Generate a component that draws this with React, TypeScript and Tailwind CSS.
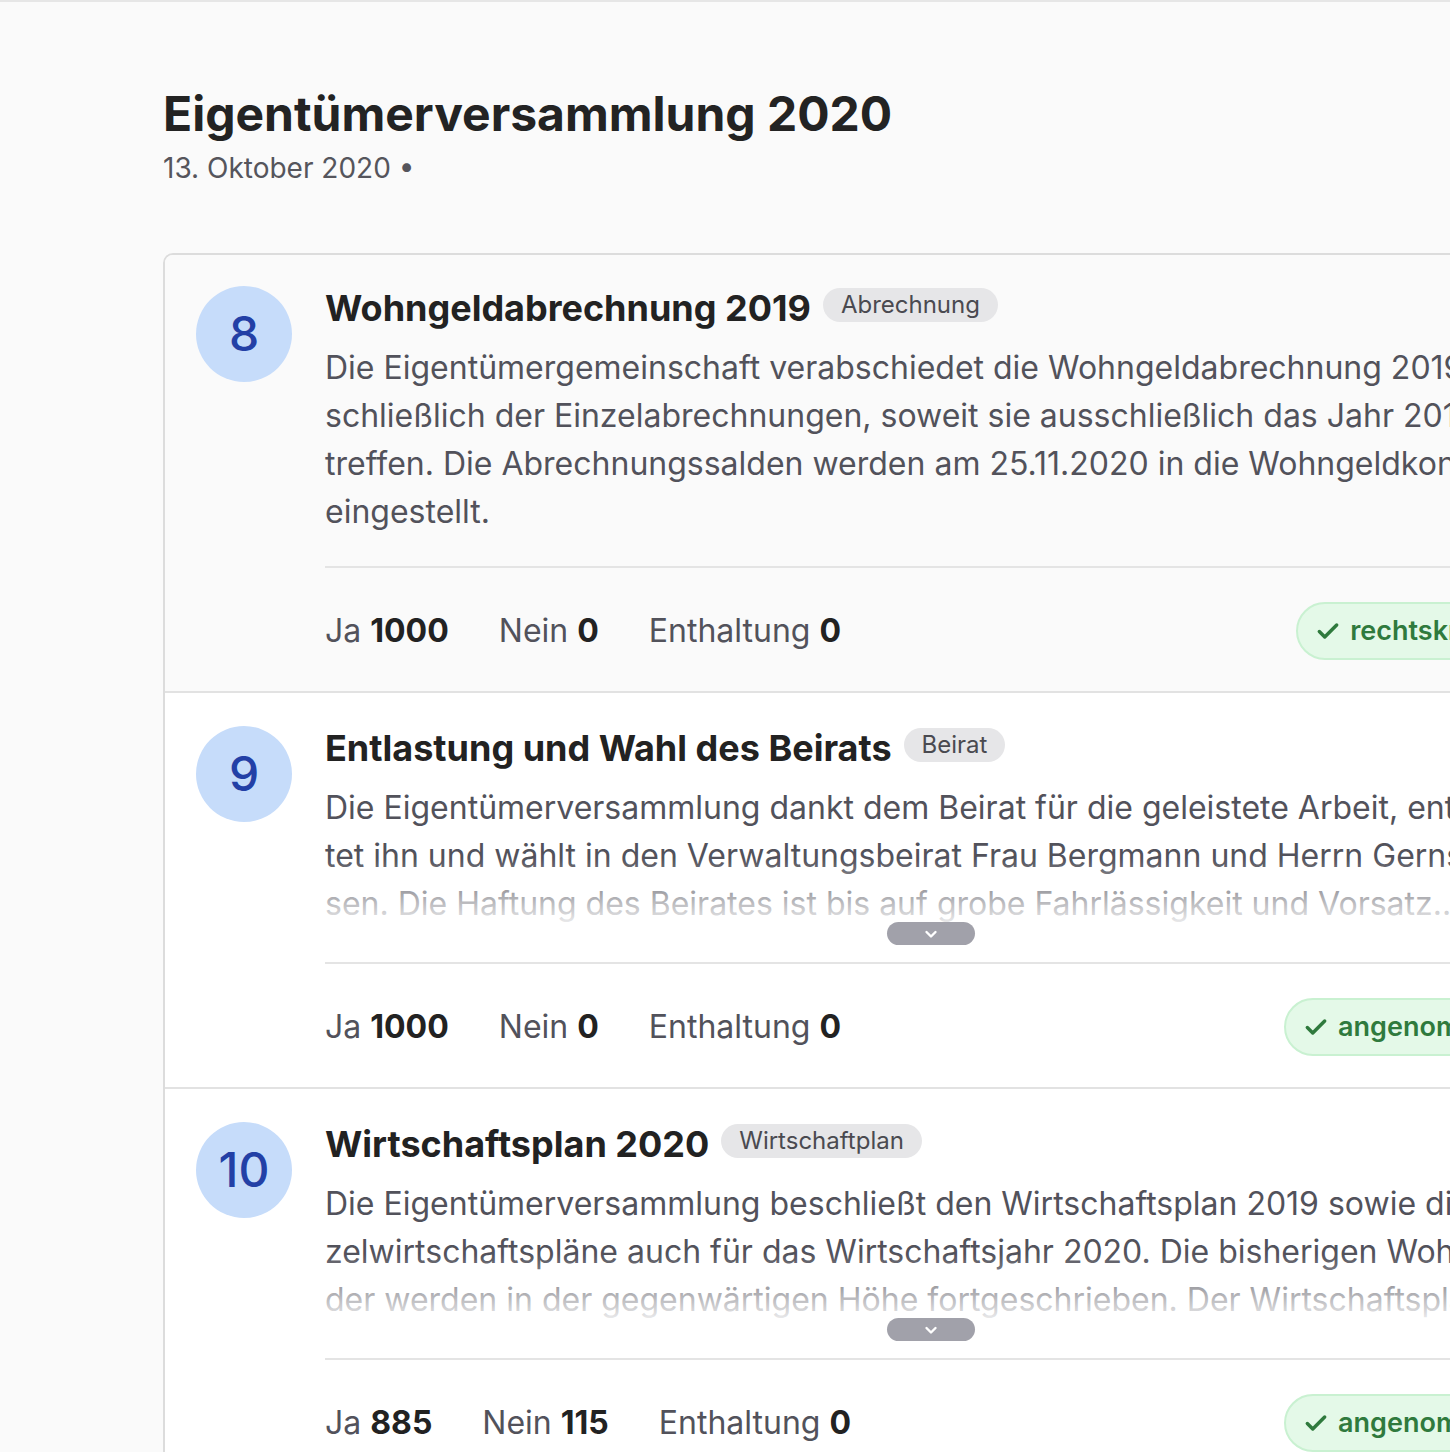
import React from "react";

type Item = {
  n: string;
  title: string;
  tag: string;
  lines: string[];
  collapsed: boolean;
  ja: string;
  nein: string;
  enth: string;
  status: string;
  bg: string;
};

const items: Item[] = [
  {
    n: "8",
    title: "Wohngeldabrechnung 2019",
    tag: "Abrechnung",
    lines: [
      "Die Eigentümergemeinschaft verabschiedet die Wohngeldabrechnung 2019 ein-",
      "schließlich der Einzelabrechnungen, soweit sie ausschließlich das Jahr 2019 be-",
      "treffen. Die Abrechnungssalden werden am 25.11.2020 in die Wohngeldkonten",
      "eingestellt.",
    ],
    collapsed: false,
    ja: "1000",
    nein: "0",
    enth: "0",
    status: "rechtskräftig",
    bg: "bg-[#fafafa]",
  },
  {
    n: "9",
    title: "Entlastung und Wahl des Beirats",
    tag: "Beirat",
    lines: [
      "Die Eigentümerversammlung dankt dem Beirat für die geleistete Arbeit, entlas-",
      "tet ihn und wählt in den Verwaltungsbeirat Frau Bergmann und Herrn Gerns-",
      "sen. Die Haftung des Beirates ist bis auf grobe Fahrlässigkeit und Vorsatz...",
    ],
    collapsed: true,
    ja: "1000",
    nein: "0",
    enth: "0",
    status: "angenommen",
    bg: "bg-white",
  },
  {
    n: "10",
    title: "Wirtschaftsplan 2020",
    tag: "Wirtschaftplan",
    lines: [
      "Die Eigentümerversammlung beschließt den Wirtschaftsplan 2019 sowie die Ein-",
      "zelwirtschaftspläne auch für das Wirtschaftsjahr 2020. Die bisherigen Wohngel-",
      "der werden in der gegenwärtigen Höhe fortgeschrieben. Der Wirtschaftsplan",
    ],
    collapsed: true,
    ja: "885",
    nein: "115",
    enth: "0",
    status: "angenommen",
    bg: "bg-white",
  },
];

function Check() {
  return (
    <svg width="26" height="26" viewBox="0 0 24 24" fill="none" stroke="currentColor" strokeWidth="3.2" strokeLinecap="round" strokeLinejoin="round">
      <path d="M4 12.5l5 5L20 6.5" />
    </svg>
  );
}

function Chevron() {
  return (
    <svg width="14" height="10" viewBox="0 0 14 10" fill="none" stroke="white" strokeWidth="2.4" strokeLinecap="round" strokeLinejoin="round">
      <path d="M2.5 3l4.5 4.5L11.5 3" />
    </svg>
  );
}

function AgendaItem({ item, first }: { item: Item; first: boolean }) {
  return (
    <div className={`flex gap-[33px] px-[31px] border-b-2 border-[#e2e2e2] ${item.bg} ${first ? "pt-[31px]" : "pt-[33px]"}`}>
      <div className="w-[96px] h-[96px] shrink-0 rounded-full bg-[#c6dcfa] flex items-center justify-center text-[48px] font-medium text-[#2340a6] leading-none">
        {item.n}
      </div>
      <div className="w-[1212px] shrink-0">
        <div className="flex items-center gap-[12px]">
          <div className="text-[36px] leading-[44px] font-bold text-[#222222] whitespace-nowrap">{item.title}</div>
          <div className="h-[34px] px-[18px] rounded-full bg-[#e6e6e8] text-[#4a4a50] text-[24px] leading-[34px] whitespace-nowrap -mt-[6px]">
            {item.tag}
          </div>
        </div>
        <div className="relative mt-[14px]">
          {item.lines.map((l, i) => (
            <div key={i} className="text-[32px] leading-[48px] text-[#52525b] whitespace-nowrap">
              {l}
            </div>
          ))}
          {item.collapsed && (
            <div className="absolute left-0 right-0 bottom-0 h-[70px] bg-linear-to-b from-white/0 to-white/95" />
          )}
        </div>
        {item.collapsed ? (
          <div className="flex justify-center -mt-[6px] mb-[17px] relative">
            <div className="w-[88px] h-[23px] rounded-full bg-[#a1a1aa] flex items-center justify-center">
              <Chevron />
            </div>
          </div>
        ) : (
          <div className="h-[30px]" />
        )}
        <div className="border-t-2 border-[#e4e4e4] flex items-center justify-between pt-[34px] pb-[31px]">
          <div className="flex items-center gap-[50px] text-[32px] leading-[40px] text-[#52525b] whitespace-nowrap">
            <div>
              Ja <span className="font-bold text-[#222222]">{item.ja}</span>
            </div>
            <div>
              Nein <span className="font-bold text-[#222222]">{item.nein}</span>
            </div>
            <div>
              Enthaltung <span className="font-bold text-[#222222]">{item.enth}</span>
            </div>
          </div>
          <div className="h-[58px] pl-[17px] pr-[18px] rounded-full border-2 border-[#c9f1d1] bg-[#e4f9e8] text-[#2f7a3d] flex items-center gap-[9px] text-[27px] font-semibold whitespace-nowrap">
            <Check />
            <span>{item.status}</span>
          </div>
        </div>
      </div>
    </div>
  );
}

export default function App() {
  return (
    <div className="w-[1450px] h-[1452px] overflow-hidden bg-[#fafafa] border-t-2 border-[#e6e6e6] font-['Inter',sans-serif]">
      <div className="pl-[163px] pt-[83px]">
        <h1 className="text-[48px] leading-[58px] font-bold text-[#232323] whitespace-nowrap">Eigentümerversammlung 2020</h1>
        <div className="text-[28px] leading-[34px] text-[#55555c] mt-[8px] whitespace-nowrap">13. Oktober 2020 •</div>
        <div className="mt-[68px] w-[1407px] border-2 border-[#dcdcdc] rounded-tl-[10px] overflow-hidden">
          {items.map((it, i) => (
            <AgendaItem key={i} item={it} first={i === 0} />
          ))}
        </div>
      </div>
    </div>
  );
}
